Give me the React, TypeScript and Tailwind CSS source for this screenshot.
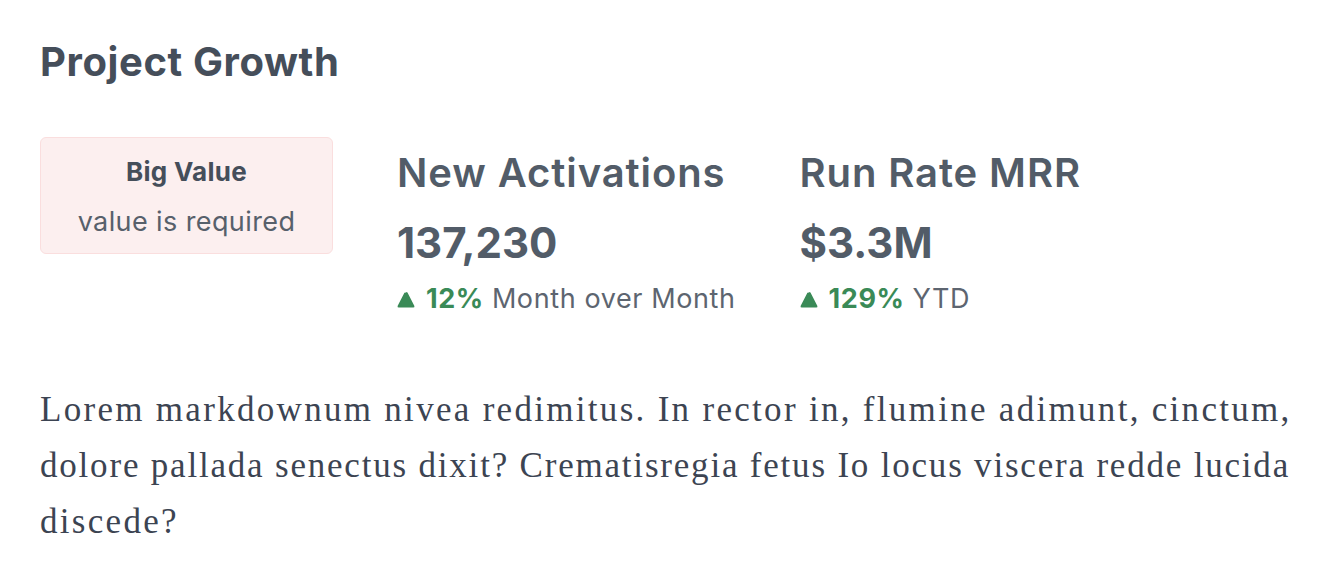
export default function App() {
  return (
    <div className="min-h-screen bg-white pl-10 pr-4 pt-10 font-['Inter',sans-serif]">
      <h1 className="text-[40px] font-bold leading-[44px] tracking-[0.6px] text-[#454e5a]">Project Growth</h1>

      <div className="mt-[53px] flex items-start gap-16">
        <div className="w-[293px] rounded-md border border-[#fadede] bg-[#fcefef] pt-[18px] pb-[15px] text-center">
          <div className="text-[26px] font-bold leading-[32px] tracking-[0.3px] text-[#454e5a]">Big Value</div>
          <div className="mt-[18px] text-[27px] leading-[32px] tracking-[0.4px] text-[#57606b]">value is required</div>
        </div>

        <Stat title="New Activations" value="137,230" delta="12%" label="Month over Month" />
        <Stat title="Run Rate MRR" value="$3.3M" delta="129%" label="YTD" />
      </div>

      {/* lines held per row so the serif fallback wraps like the reference */}
      <p className="mt-[67px] whitespace-nowrap text-[35px] leading-[56px] text-[#3c4452] font-['Liberation_Serif',serif]">
        <span className="block tracking-[2.3px]">
          Lorem markdownum nivea redimitus. In rector in, flumine adimunt, cinctum,
        </span>
        <span className="block tracking-[1.8px]">
          dolore pallada senectus dixit? Crematisregia fetus Io locus viscera redde lucida
        </span>
        <span className="block tracking-[2.3px]">discede?</span>
      </p>
    </div>
  );
}

function Stat({ title, value, delta, label }: { title: string; value: string; delta: string; label: string }) {
  return (
    <div className="flex flex-col pt-[14px]">
      <div className="text-[40px] font-semibold leading-[44px] tracking-[0.9px] text-[#525c68]">{title}</div>
      <div className="mt-[24px] text-[42px] font-bold leading-[48px] text-[#525c68]">{value}</div>
      <div className="mt-[16px] flex items-center text-[27px] leading-[32px] tracking-[0.6px]">
        <svg width="18" height="17" viewBox="0 0 18 17" className="mr-[11px] fill-[#3a8a57]">
          <path d="M9 1.5 Q9.8 0.5 10.6 1.7 L17.4 15 Q17.8 16.5 16.2 16.5 L1.8 16.5 Q0.2 16.5 0.6 15 L7.4 1.7 Z" />
        </svg>
        <span className="font-bold text-[#3a8a57]">{delta}</span>
        <span className="ml-[8px] text-[#5d6570]">{label}</span>
      </div>
    </div>
  );
}
